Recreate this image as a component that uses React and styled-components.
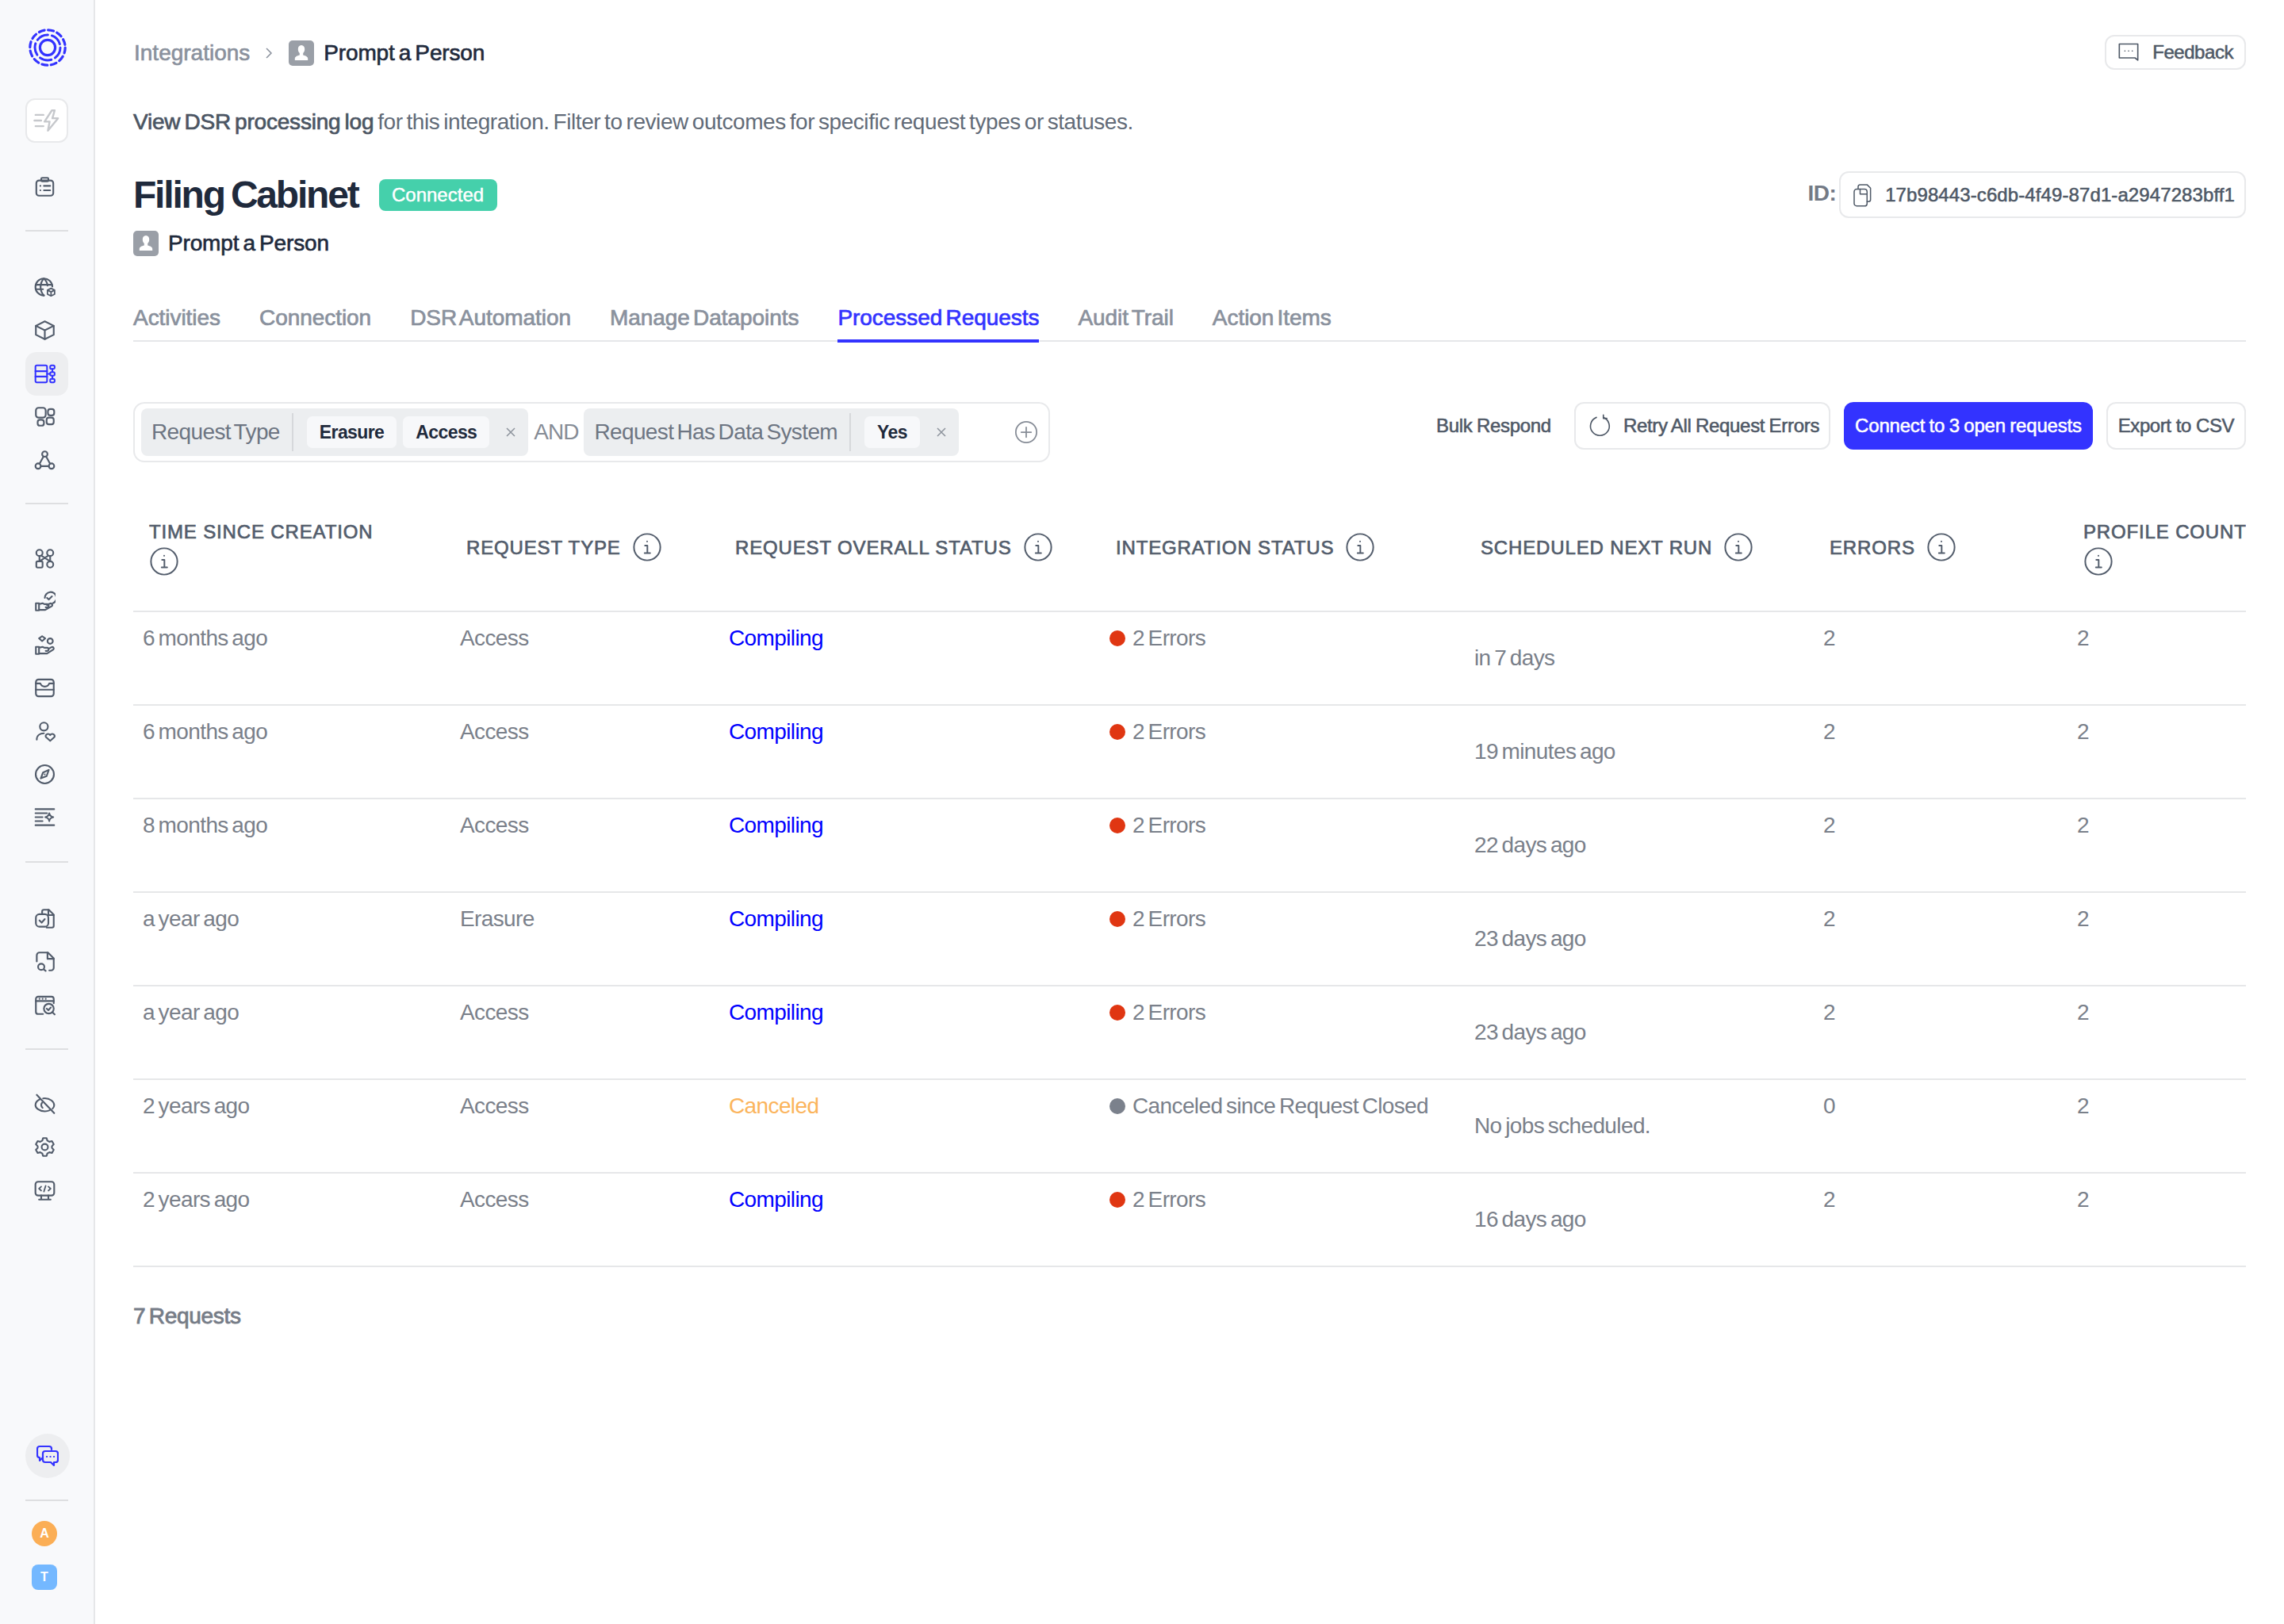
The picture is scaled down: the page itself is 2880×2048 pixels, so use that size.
import React from "react";
import styled, { createGlobalStyle } from "styled-components";

const Global = createGlobalStyle`
  * { box-sizing: border-box; }
  html, body { margin: 0; padding: 0; background: #fff; }
  body { font-family: "Liberation Sans", Arial, sans-serif; color: #7a808a; -webkit-font-smoothing: antialiased; }
`;

const Shell = styled.div`
  display: flex;
  width: 2880px;
  height: 2048px;
  overflow: hidden;
  background: #fff;
`;
const Sidebar = styled.aside`
  flex: 0 0 120px;
  height: 100%;
  background: #f8f9fb;
  border-right: 2px solid #e6e7e9;
  display: flex;
  flex-direction: column;
  padding: 36px 0 43px 32px;
`;
const Logo = styled.div`
  width: 56px;
  height: 48px;
  display: flex;
  justify-content: center;
  color: #3333ff;
`;
const FlashBtn = styled.div`
  width: 54px;
  height: 56px;
  margin-top: 40px;
  border: 2px solid #e8e9eb;
  border-radius: 12px;
  background: #fff;
  display: flex;
  align-items: center;
  justify-content: center;
  color: #c6c8cc;
`;
const NavGroup = styled.div`
  display: flex;
  flex-direction: column;
  margin-top: ${(p) => p.$top || 0}px;
`;
const NavItem = styled.div`
  width: 54px;
  height: 54.4px;
  display: flex;
  align-items: center;
  padding-left: 11px;
  border-radius: 14px;
  color: ${(p) => (p.$active ? "#3333ff" : "#525c6b")};
  background: ${(p) => (p.$active ? "#edeef0" : "transparent")};
`;
const NavRule = styled.div`
  width: 54px;
  height: 2px;
  flex: none;
  background: #dedfe1;
  margin-top: ${(p) => p.$top || 0}px;
`;
const ChatBtn = styled.div`
  width: 56px;
  height: 56px;
  margin-top: auto;
  border-radius: 50%;
  background: #edeef0;
  color: #3333ff;
  display: flex;
  align-items: center;
  justify-content: center;
`;
const Avatar = styled.div`
  width: 32px;
  height: 32px;
  margin: ${(p) => p.$mt}px 0 0 8px;
  border-radius: ${(p) => (p.$round ? "50%" : "8px")};
  background: ${(p) => p.$bg};
  color: #fff;
  font-size: 16px;
  font-weight: 700;
  display: flex;
  align-items: center;
  justify-content: center;
`;

const Main = styled.main`
  flex: 1;
  min-width: 0;
  padding: 44px 48px 0 48px;
  display: flex;
  flex-direction: column;
`;
const TopBar = styled.div`
  display: flex;
  justify-content: space-between;
  align-items: flex-start;
  height: 43px;
`;
const Crumbs = styled.div`
  display: flex;
  align-items: center;
  height: 46px;
  font-size: 28px;
  letter-spacing: -0.15px;
  word-spacing: -2.5px;
  -webkit-text-stroke: 0.65px currentColor;
  padding-left: 1px;
`;
const CrumbLink = styled.span`
  color: #8a919d;
  letter-spacing: 0;
`;
const CrumbChevron = styled.span`
  display: flex;
  margin: 0 20px 0 19px;
  color: #8a919d;
`;
const CrumbName = styled.span`
  color: #1f2a3c;
  margin-left: 12px;
`;
const PersonTile = styled.span`
  width: 32px;
  height: 32px;
  flex: none;
  border-radius: 5px;
  background: #9a9fa7;
  display: flex;
  align-items: center;
  justify-content: center;
`;
const OutlineBtn = styled.div`
  display: flex;
  align-items: center;
  gap: ${(p) => p.$gap || 0}px;
  height: ${(p) => p.$h || 60}px;
  padding: 0 ${(p) => p.$pr || 14}px 0 ${(p) => p.$pl || 14}px;
  border: 2px solid #e8e9eb;
  border-radius: 12px;
  background: #fff;
  color: #4f5967;
  font-size: 24px;
  letter-spacing: ${(p) => p.$ls ?? -0.3}px;
  word-spacing: ${(p) => p.$ws ?? 0}px;
  -webkit-text-stroke: 0.55px currentColor;
  white-space: nowrap;
`;
const Description = styled.p`
  margin: 50px 0 0;
  font-size: 28px;
  line-height: 34px;
  letter-spacing: -0.42px;
  word-spacing: -2.5px;
  color: #626b78;
`;
const Strong = styled.span`
  color: #4b5563;
  letter-spacing: -0.2px;
  -webkit-text-stroke: 0.7px currentColor;
`;
const TitleRow = styled.div`
  display: flex;
  justify-content: space-between;
  align-items: flex-start;
  margin-top: 45px;
  height: 59px;
`;
const TitleLeft = styled.div`
  display: flex;
  align-items: center;
  gap: 26px;
  height: 59px;
`;
const Title = styled.h1`
  margin: 0;
  font-size: 48px;
  font-weight: 700;
  letter-spacing: -2.2px;
  word-spacing: -3px;
  color: #1f2a3c;
`;
const Badge = styled.span`
  display: flex;
  align-items: center;
  justify-content: center;
  width: 149px;
  height: 40px;
  border-radius: 8px;
  background: #45d0ab;
  color: #fff;
  font-size: 24px;
  letter-spacing: 0;
  -webkit-text-stroke: 0.45px currentColor;
`;
const IdWrap = styled.div`
  display: flex;
  align-items: flex-start;
  gap: 4px;
`;
const IdLabel = styled.span`
  margin-top: 12px;
  font-size: 28px;
  font-weight: 700;
  letter-spacing: -0.6px;
  color: #737a85;
`;
const SubRow = styled.div`
  display: flex;
  align-items: center;
  gap: 12px;
  margin-top: 16px;
  font-size: 28px;
  letter-spacing: -0.15px;
  word-spacing: -2.5px;
  color: #1f2a3c;
  -webkit-text-stroke: 0.65px currentColor;
`;
const Tabs = styled.nav`
  display: flex;
  gap: 49px;
  margin-top: 44px;
  height: 64px;
  border-bottom: 2px solid #e6e7e9;
`;
const Tab = styled.div`
  height: 65px;
  padding-top: 18px;
  font-size: 28px;
  line-height: 32px;
  letter-spacing: -0.05px;
  word-spacing: -3.5px;
  -webkit-text-stroke: 0.7px currentColor;
  white-space: nowrap;
  color: ${(p) => (p.$active ? "#3333ff" : "#8a919d")};
  border-bottom: ${(p) => (p.$active ? "4px solid #3333ff" : "none")};
`;
const Toolbar = styled.div`
  display: flex;
  justify-content: space-between;
  align-items: flex-start;
  margin-top: 76px;
`;
const FilterBox = styled.div`
  width: 1156px;
  height: 76px;
  border: 2px solid #e8e9eb;
  border-radius: 14px;
  display: flex;
  align-items: center;
  padding: 0 8px;
`;
const FilterGroup = styled.div`
  display: flex;
  align-items: center;
  height: 60px;
  padding: 0 15px 0 13px;
  background: #eceef0;
  border-radius: 8px;
`;
const FilterLabel = styled.span`
  font-size: 28px;
  letter-spacing: -0.62px;
  word-spacing: -3px;
  color: #6d7582;
  padding-right: 15px;
  margin-right: 17px;
  height: 48px;
  line-height: 48px;
  border-right: 2px solid #d6d8db;
  white-space: nowrap;
`;
const Chip = styled.span`
  height: 40px;
  padding: 0 16px;
  margin-right: 8px;
  border-radius: 7px;
  background: #f7f8fa;
  display: flex;
  align-items: center;
  font-size: 23px;
  letter-spacing: -0.6px;
  font-weight: 700;
  color: #1f2a3c;
`;
const Remove = styled.span`
  display: flex;
  margin-left: 12px;
  color: #8d939c;
`;
const AndWord = styled.span`
  font-size: 28px;
  letter-spacing: -1px;
  color: #868c96;
  margin: 0 7px;
`;
const AddIcon = styled.span`
  margin-left: auto;
  margin-right: 5px;
  display: flex;
  color: #868c96;
`;
const Actions = styled.div`
  display: flex;
  align-items: center;
  gap: 17px;
`;
const GhostAction = styled.span`
  margin-right: 12px;
  font-size: 24px;
  letter-spacing: -0.3px;
  word-spacing: -1px;
  color: #4f5967;
  -webkit-text-stroke: 0.55px currentColor;
  white-space: nowrap;
`;
const PrimaryBtn = styled.div`
  height: 60px;
  padding: 0 14px;
  display: flex;
  align-items: center;
  background: #3333ff;
  border-radius: 12px;
  color: #fff;
  font-size: 24px;
  letter-spacing: -0.2px;
  word-spacing: -1px;
  -webkit-text-stroke: 0.55px currentColor;
  white-space: nowrap;
`;
const TableWrap = styled.div`
  width: 2664px;
  margin-top: 28px;
  overflow: hidden;
`;
const Table = styled.table`
  width: 2670px;
  table-layout: fixed;
  border-collapse: collapse;
`;
const Th = styled.th`
  height: 160px;
  padding: 0 0 0 20px;
  text-align: left;
  font-weight: 400;
  vertical-align: middle;
  border-bottom: 2px solid #e6e7e9;
`;
const HeadCell = styled.div`
  display: flex;
  flex-direction: ${(p) => (p.$stack ? "column" : "row")};
  align-items: ${(p) => (p.$stack ? "flex-start" : "center")};
  gap: ${(p) => (p.$stack ? 1 : 14)}px;
  font-size: 24px;
  line-height: 34px;
  letter-spacing: 0.85px;
  color: #535d6c;
  -webkit-text-stroke: 0.7px currentColor;
  white-space: nowrap;
`;
const InfoSlot = styled.span`
  display: flex;
  margin-top: ${(p) => (p.$stack ? 0 : -2)}px;
  -webkit-text-stroke: 0;
`;
const Td = styled.td`
  height: 118px;
  padding: 16px 0 0 12px;
  vertical-align: top;
  font-size: 28px;
  line-height: 34px;
  letter-spacing: -0.62px;
  word-spacing: -2.5px;
  color: ${(p) => p.$color || "#7a808a"};
  border-bottom: 2px solid #e6e7e9;
  white-space: nowrap;
`;
const StatusLine = styled.div`
  display: flex;
  align-items: center;
  gap: 9px;
`;
const Dot = styled.span`
  width: 20px;
  height: 20px;
  flex: none;
  border-radius: 50%;
  background: ${(p) => p.$color};
`;
const NextRun = styled.div`
  padding-top: 25px;
`;
const Footer = styled.div`
  margin-top: 45px;
  font-size: 28px;
  line-height: 34px;
  letter-spacing: -0.3px;
  word-spacing: -3px;
  color: #767c87;
  -webkit-text-stroke: 0.8px currentColor;
`;

const Ico = ({ children, size = 27, sw = 1.9, vb = 24 }) => (
  <svg width={size} height={size} viewBox={`0 0 ${vb} ${vb}`} fill="none" stroke="currentColor" strokeWidth={sw} strokeLinecap="round" strokeLinejoin="round">
    {children}
  </svg>
);

const LogoMark = () => (
  <svg width="48" height="48" viewBox="0 0 48 48" fill="none" stroke="currentColor" strokeLinecap="round">
    <circle cx="24" cy="24" r="22.2" strokeWidth="3.2" strokeDasharray="7 4.62" />
    <circle cx="24" cy="24" r="16" strokeWidth="3" strokeDasharray="15 5.1" />
    <circle cx="24" cy="24" r="9.6" strokeWidth="3.2" />
  </svg>
);
const FlashIcon = () => (
  <Ico size={34} sw={1.7}>
    <path d="M2 7h7M1 12h6M2 17h7" />
    <path d="M16.500 3 10 13h4.500l-1.500 8 9-11h-5l2-7z" />
  </Ico>
);
const icons = {
  clipboard: (
    <Ico><rect x="2.500" y="5" width="19" height="17" rx="3" /><rect x="8" y="2" width="8" height="4" rx="1.200" /><path d="M7 11h.1M7 16h.1M11 11h7M11 16h7" /></Ico>
  ),
  globeBox: (
    <Ico><path d="M11 21a9.500 9.500 0 1 1 9.500-10" /><path d="M2 9h18M2 14h8" /><path d="M11 2c-5 5-5 14 0 19M11 2c3 3 4 6 4 8" /><path d="m19 13 4 2v4.500l-4 2-4-2V15zM15 15l4 2 4-2M19 17v4.500" strokeWidth="1.600" /></Ico>
  ),
  box: (
    <Ico><path d="M12 2 22 7v10l-10 5-10-5V7z" /><path d="m2 7 10 5 10-5M12 12v10" /></Ico>
  ),
  tableNodes: (
    <Ico sw={1.800}><rect x="1.500" y="2.500" width="13" height="19" rx="1.500" /><path d="M1.500 9h13M1.500 15h13" /><rect x="18" y="2.500" width="5" height="4" rx="1.500" /><rect x="18" y="10" width="5" height="4" rx="1.500" /><rect x="18" y="17.500" width="5" height="4" rx="1.500" /><path d="M14.500 12H18M20.500 6.500V10M20.500 14v3.500" /></Ico>
  ),
  blocks: (
    <Ico><rect x="2" y="2" width="11" height="11" rx="3" /><rect x="15.500" y="3.500" width="7" height="7" rx="2.500" /><rect x="4" y="15.500" width="7" height="6.500" rx="2.500" /><rect x="14" y="13" width="8" height="7.500" rx="2.500" /></Ico>
  ),
  triNet: (
    <Ico><circle cx="12" cy="5" r="3" /><circle cx="4.500" cy="18.500" r="3" /><circle cx="19.500" cy="18.500" r="3" /><path d="M10.500 7.700 6 16M13.500 7.700 18 16M7.500 18.500h9" /></Ico>
  ),
  flow: (
    <Ico><circle cx="6" cy="5.500" r="3.500" /><circle cx="18" cy="5.500" r="3.500" /><rect x="2.500" y="15" width="7" height="7" rx="1.500" /><circle cx="18" cy="18.500" r="3.500" /><path d="M6 9v6M18 9v6M8 8.500l10 6.500M16 8.500 6 15" /></Ico>
  ),
  thumbCheck: (
    <Ico><path d="M2 14h3.500v8H2zM5.500 15l4-1 2 1h3.500a1.800 1.800 0 0 1 0 3.500h-2M5.500 21.500h7l7-4a1.700 1.700 0 0 0-2-3l-3 1.500" /><path d="M12 8a6.500 6.500 0 1 1 9 6" /><path d="m14.500 8 2 1.800 3.500-3.500" /></Ico>
  ),
  handCoins: (
    <Ico><path d="M2 14h3.500v8H2zM5.500 15l4-1 2 1h3.500a1.800 1.800 0 0 1 0 3.500h-2M5.500 21.500h9l7-4.500a1.700 1.700 0 0 0-2-2.700l-3.500 2" /><path d="m9 2 3.500 2.500L9 7.500 5.500 4.500z" /><circle cx="18" cy="7.500" r="3" /></Ico>
  ),
  inbox: (
    <Ico><rect x="2" y="2.500" width="20" height="19" rx="3" /><path d="M2 14h20" /><path d="M2 7h5c1 2.500 2.500 3.500 5 3.500S16 9.500 17 7h5" /></Ico>
  ),
  personHeart: (
    <Ico><circle cx="11" cy="6.500" r="4.500" /><path d="M3 21c0-4.500 3.500-7 8-7" /><path d="M18 22.500l-4.500-4c-2-2.500 2-5.500 4.500-2.500 2.500-3 6.500 0 4.500 2.500z" /></Ico>
  ),
  compass: (
    <Ico><circle cx="12" cy="12" r="10.200" /><path d="M16.500 7 14 14l-6.500 2.500L10 10z" /><path d="M11.900 12h.1" /></Ico>
  ),
  linesSpark: (
    <Ico sw={1.800}><path d="M1.500 3h21M1.500 7.500h13M1.500 12h8M1.500 16.500h8M1.500 21h21" /><path d="M17 7.500c.5 3 1.500 4 4.500 4.500-3 .5-4 1.500-4.500 4.500-.5-3-1.500-4-4.500-4.500 3-.5 4-1.500 4.500-4.500z" /></Ico>
  ),
  docCheck: (
    <Ico><path d="M9 6V4a2 2 0 0 1 2-2h5.500L22 7.500V20a2 2 0 0 1-2 2h-6" /><path d="M16 2v6h6" /><rect x="2" y="7" width="14" height="14" rx="4" /><path d="m6 14 2.500 2.500L12 12.500" /></Ico>
  ),
  docSearch: (
    <Ico><path d="M3 12V5a3 3 0 0 1 3-3h9.500L22 8.500V19a3 3 0 0 1-3 3h-2" /><path d="M15 2v7h7" /><circle cx="8" cy="18" r="3.500" /><path d="m11 21 2 1.500" /></Ico>
  ),
  browserSearch: (
    <Ico><path d="M22 10V5a2.500 2.500 0 0 0-2.500-2.500h-15A2.500 2.500 0 0 0 2 5v14.500A2.500 2.500 0 0 0 4.500 22H10" /><path d="M2 7.500h20" /><path d="M6 5h.1M9.500 5h.1M13 5h.1" /><circle cx="16.500" cy="16" r="5.500" /><path d="m14.200 16 1.800 1.700 2.700-3M20.700 20.200l2.300 2.300" /></Ico>
  ),
  eyeOff: (
    <Ico><path d="M3 1.500 22.500 22" /><path d="M6.500 6.500C3.500 8 1.500 10.500 1.500 13c0 3 4.500 7 10.500 7 2 0 4-.5 5.500-1.200" /><path d="M10 5.500c.6-.1 1.300-.2 2-.2 6 0 10.500 4 10.500 7.700 0 1.500-.7 2.800-1.800 4" /><path d="M9 10.200a4 4 0 0 0 .5 5.800" /></Ico>
  ),
  gear: (
    <Ico><path d="M10 2h4l.8 2.800 2.300 1.300 2.900-.7 2 3.500L20 11v2l2 2.100-2 3.500-2.900-.7-2.300 1.300L14 22h-4l-.8-2.800-2.300-1.300-2.900.7-2-3.500L4 13v-2L2 8.900l2-3.500 2.900.7 2.300-1.300z" /><circle cx="12" cy="12" r="3.500" /></Ico>
  ),
  monitorCode: (
    <Ico><rect x="1.500" y="2" width="21" height="15.500" rx="3" /><path d="M8 17.500V22M16 17.500V22M5.500 22h13" /><path d="M8 7.500 5.500 9.800 8 12M16 7.500l2.500 2.300L16 12M13 6.500l-2 6.500" strokeWidth="1.600" /></Ico>
  ),
};
const ChatIcon = () => (
  <svg width="28" height="28" viewBox="0 0 28 28" fill="none" stroke="currentColor" strokeWidth="2.2" strokeLinecap="round" strokeLinejoin="round">
    <path d="M19 6V5a3 3 0 0 0-3-3H4a3 3 0 0 0-3 3v8a3 3 0 0 0 3 3v4l3-3" />
    <path d="M11 8h13a3 3 0 0 1 3 3v8a3 3 0 0 1-3 3h-2v4l-4-4h-7a3 3 0 0 1-3-3v-8a3 3 0 0 1 3-3z" />
    <path d="M13 15h.1M17.500 15h.1M22 15h.1" />
  </svg>
);
const Person = () => (
  <svg width="20" height="22" viewBox="0 0 20 22" fill="#fff">
    <path d="M10 1c2.800 0 4.200 2.200 4.200 5 0 2.200-.8 4-2 5v2.500c3 .8 6 2 6 4.500v2H1.800v-2c0-2.500 3-3.700 6-4.500V11c-1.200-1-2-2.800-2-5 0-2.800 1.400-5 4.200-5z" />
  </svg>
);
const Info = () => (
  <Ico size={38} sw={1.250}>
    <circle cx="12" cy="12" r="10.500" />
    <path d="M12 7.400v.1M10.300 10.800H12.200v6M10 16.800h4.400" />
  </Ico>
);
const Chevron = () => (
  <svg width="10" height="16" viewBox="0 0 10 16" fill="none" stroke="currentColor" strokeWidth="1.500"><path d="m2 2 6 6-6 6" /></svg>
);
const Cross = () => (
  <svg width="14" height="14" viewBox="0 0 14 14" fill="none" stroke="currentColor" strokeWidth="1.500"><path d="m2 2 10 10M12 2 2 12" /></svg>
);

const nav1 = ["globeBox", "box", "tableNodes", "blocks", "triNet"];
const nav2 = ["flow", "thumbCheck", "handCoins", "inbox", "personHeart", "compass", "linesSpark"];
const nav3 = ["docCheck", "docSearch", "browserSearch"];
const nav4 = ["eyeOff", "gear", "monitorCode"];

const tabs = ["Activities", "Connection", "DSR Automation", "Manage Datapoints", "Processed Requests", "Audit Trail", "Action Items"];
const colWidths = [400, 339, 480, 460, 440, 320, 231];
const headers = [
  { label: "TIME SINCE CREATION", stack: true },
  { label: "REQUEST TYPE" },
  { label: "REQUEST OVERALL STATUS" },
  { label: "INTEGRATION STATUS" },
  { label: "SCHEDULED NEXT RUN" },
  { label: "ERRORS" },
  { label: "PROFILE COUNT", stack: true },
];
const errorStatus = { text: "2 Errors", dot: "#e03612" };
const rows = [
  { age: "6 months ago", type: "Access", overall: "Compiling", status: errorStatus, next: "in 7 days", errors: 2 },
  { age: "6 months ago", type: "Access", overall: "Compiling", status: errorStatus, next: "19 minutes ago", errors: 2 },
  { age: "8 months ago", type: "Access", overall: "Compiling", status: errorStatus, next: "22 days ago", errors: 2 },
  { age: "a year ago", type: "Erasure", overall: "Compiling", status: errorStatus, next: "23 days ago", errors: 2 },
  { age: "a year ago", type: "Access", overall: "Compiling", status: errorStatus, next: "23 days ago", errors: 2 },
  { age: "2 years ago", type: "Access", overall: "Canceled", status: { text: "Canceled since Request Closed", dot: "#7b818c" }, next: "No jobs scheduled.", errors: 0 },
  { age: "2 years ago", type: "Access", overall: "Compiling", status: errorStatus, next: "16 days ago", errors: 2 },
];

const NavList = ({ names, top }) => (
  <NavGroup $top={top}>
    {names.map((n) => (
      <NavItem key={n} $active={n === "tableNodes"}>{icons[n]}</NavItem>
    ))}
  </NavGroup>
);

export default function App() {
  return (
    <Shell>
      <Global />
      <Sidebar>
        <Logo><LogoMark /></Logo>
        <FlashBtn><FlashIcon /></FlashBtn>
        <NavGroup $top={28}><NavItem>{icons.clipboard}</NavItem></NavGroup>
        <NavRule $top={28} />
        <NavList names={nav1} top={43} />
        <NavRule $top={27} />
        <NavList names={nav2} top={41} />
        <NavRule $top={28} />
        <NavList names={nav3} top={43} />
        <NavRule $top={28} />
        <NavList names={nav4} top={41} />
        <ChatBtn><ChatIcon /></ChatBtn>
        <NavRule $top={27} />
        <Avatar $mt={25} $round $bg="#fbae55">A</Avatar>
        <Avatar $mt={23} $bg="#74b8ff">T</Avatar>
      </Sidebar>
      <Main>
        <TopBar>
          <Crumbs>
            <CrumbLink>Integrations</CrumbLink>
            <CrumbChevron><Chevron /></CrumbChevron>
            <PersonTile><Person /></PersonTile>
            <CrumbName>Prompt a Person</CrumbName>
          </Crumbs>
          <OutlineBtn $h={44} $gap={16} $pl={14} $ls={-0.45}>
            <Ico size={28} sw={1.400}>
              <path d="M2 3h20v17.500l-3-2.500H2z" />
              <path d="M8 10.500h.1M12 10.500h.1M16 10.500h.1" />
            </Ico>
            Feedback
          </OutlineBtn>
        </TopBar>
        <Description>
          <Strong>View DSR processing log</Strong> for this integration. Filter to review outcomes for specific request types or statuses.
        </Description>
        <TitleRow>
          <TitleLeft>
            <Title>Filing Cabinet</Title>
            <Badge>Connected</Badge>
          </TitleLeft>
          <IdWrap>
            <IdLabel>ID:</IdLabel>
            <OutlineBtn $h={59} $gap={14} $pl={12} $pr={12} $ls={0.1}>
              <Ico size={30} sw={1.200}>
                <rect x="4" y="6" width="13" height="17" rx="2.500" />
                <path d="M8 6V3.500A2 2 0 0 1 10 1.500h7l3.500 3.500v11.500a2 2 0 0 1-2 2H17" />
                <path d="M10 6v5h7" />
              </Ico>
              17b98443-c6db-4f49-87d1-a2947283bff1
            </OutlineBtn>
          </IdWrap>
        </TitleRow>
        <SubRow>
          <PersonTile><Person /></PersonTile>
          Prompt a Person
        </SubRow>
        <Tabs>
          {tabs.map((t) => (
            <Tab key={t} $active={t === "Processed Requests"}>{t}</Tab>
          ))}
        </Tabs>
        <Toolbar>
          <FilterBox>
            <FilterGroup>
              <FilterLabel>Request Type</FilterLabel>
              <Chip>Erasure</Chip>
              <Chip>Access</Chip>
              <Remove><Cross /></Remove>
            </FilterGroup>
            <AndWord>AND</AndWord>
            <FilterGroup>
              <FilterLabel>Request Has Data System</FilterLabel>
              <Chip>Yes</Chip>
              <Remove><Cross /></Remove>
            </FilterGroup>
            <AddIcon>
              <Ico size={30} sw={1.400}>
                <circle cx="12" cy="12" r="10.500" />
                <path d="M12 7v10M7 12h10" />
              </Ico>
            </AddIcon>
          </FilterBox>
          <Actions>
            <GhostAction>Bulk Respond</GhostAction>
            <OutlineBtn $gap={14} $pl={16} $pr={12} $ws={-1}>
              <Ico size={30} sw={1.300}>
                <path d="M15 3.500A9.500 9.500 0 1 1 8 3.500" />
                <path d="M15 1v3.500h3.500" />
              </Ico>
              Retry All Request Errors
            </OutlineBtn>
            <PrimaryBtn>Connect to 3 open requests</PrimaryBtn>
            <OutlineBtn $pl={13} $pr={13} $ls={-0.45}>Export to CSV</OutlineBtn>
          </Actions>
        </Toolbar>
        <TableWrap>
          <Table>
            <colgroup>
              {colWidths.map((w, i) => <col key={i} style={{ width: w }} />)}
            </colgroup>
            <thead>
              <tr>
                {headers.map((h) => (
                  <Th key={h.label}>
                    <HeadCell $stack={h.stack}>
                      {h.label}
                      <InfoSlot $stack={h.stack}><Info /></InfoSlot>
                    </HeadCell>
                  </Th>
                ))}
              </tr>
            </thead>
            <tbody>
              {rows.map((r, i) => (
                <tr key={i}>
                  <Td>{r.age}</Td>
                  <Td>{r.type}</Td>
                  <Td $color={r.overall === "Canceled" ? "#fbb45c" : "#0000ff"}>{r.overall}</Td>
                  <Td>
                    <StatusLine><Dot $color={r.status.dot} />{r.status.text}</StatusLine>
                  </Td>
                  <Td><NextRun>{r.next}</NextRun></Td>
                  <Td>{r.errors}</Td>
                  <Td>2</Td>
                </tr>
              ))}
            </tbody>
          </Table>
        </TableWrap>
        <Footer>7 Requests</Footer>
      </Main>
    </Shell>
  );
}
